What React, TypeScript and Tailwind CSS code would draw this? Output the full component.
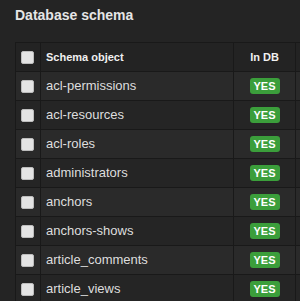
const rows = [
    "acl-permissions",
    "acl-resources",
    "acl-roles",
    "administrators",
    "anchors",
    "anchors-shows",
    "article_comments",
    "article_views",
];

function Check() {
    return (
        <span className="block h-[13px] w-[13px] rounded-[2px] border border-[#bdbdbd] bg-[#e4e4e4]" />
    );
}

export default function App() {
    return (
        <div
            className="h-[301px] w-[300px] overflow-hidden bg-[#242424] pl-[15px] pt-[7px]"
            style={{ fontFamily: '"Liberation Sans", Arial, sans-serif' }}
        >
            <h2 className="h-[35px] text-[14px] font-bold leading-[17px] text-[#e6e6e6]">
                Database schema
            </h2>
            <table className="w-[320px] table-fixed border-collapse text-[#dedede]">
                <colgroup>
                    <col className="w-[25px]" />
                    <col className="w-[193px]" />
                    <col className="w-[62px]" />
                    <col />
                </colgroup>
                <thead>
                    <tr className="h-[29px] bg-[#232323]">
                        <th className="border border-[#191919] px-[5px]">
                            <Check />
                        </th>
                        <th className="border border-[#191919] px-[5px] text-left text-[11px] font-bold text-[#f0f0f0]">
                            Schema object
                        </th>
                        <th className="border border-[#191919] text-center text-[11px] font-bold text-[#f0f0f0]">
                            In DB
                        </th>
                        <th className="border border-[#191919]" />
                    </tr>
                </thead>
                <tbody>
                    {rows.map((name, i) => (
                        <tr
                            key={name}
                            className={
                                i % 2 === 0
                                    ? "h-[29px] bg-[#2a2a2a]"
                                    : "h-[29px] bg-[#252525]"
                            }
                        >
                            <td className="border border-[#191919] px-[5px]">
                                <Check />
                            </td>
                            <td className="border border-[#191919] px-[5px] text-[13px]">
                                {name}
                            </td>
                            <td className="border border-[#191919] text-center leading-none">
                                <span className="inline-block h-[16px] w-[30px] rounded-[3px] bg-[#3b9e3b] align-middle text-[11px] font-bold leading-[16px] text-white">
                                    YES
                                </span>
                            </td>
                            <td className="border border-[#191919]" />
                        </tr>
                    ))}
                </tbody>
            </table>
        </div>
    );
}
